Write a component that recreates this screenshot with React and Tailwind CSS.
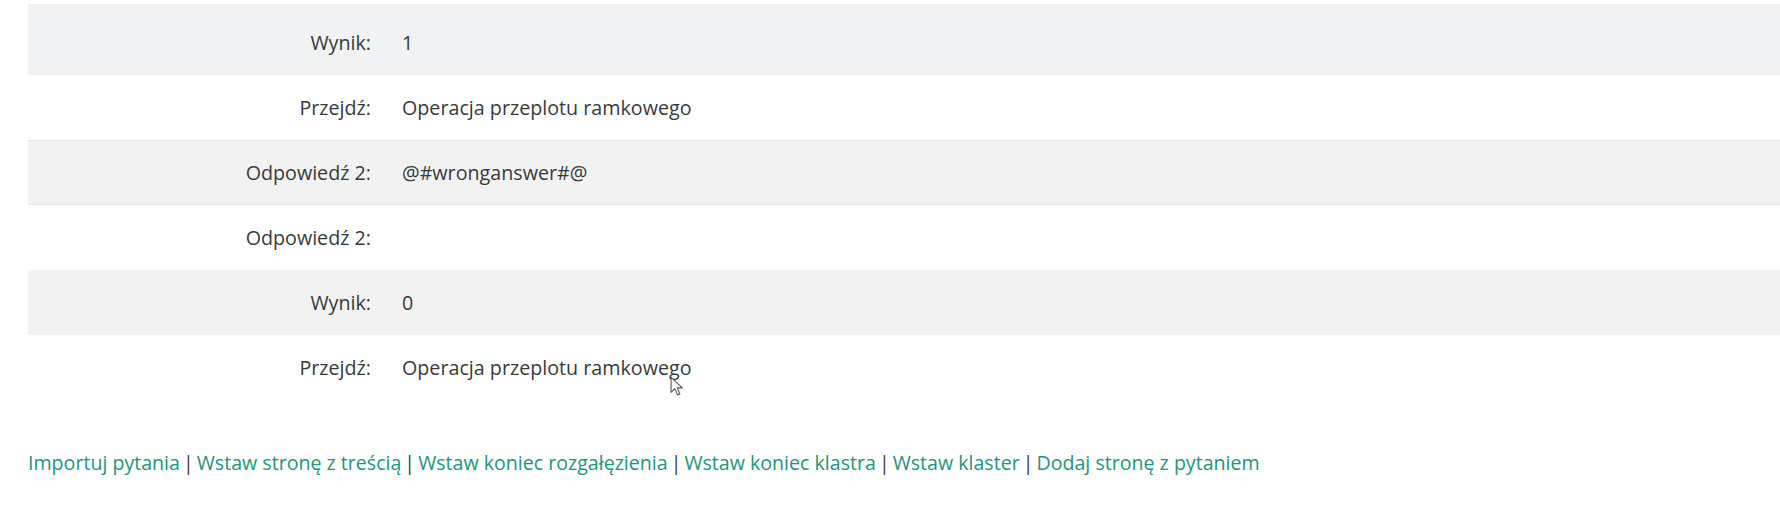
import React from "react";

const rows = [
  { label: "Wynik:", value: "1", gray: true, first: true },
  { label: "Przejdź:", value: "Operacja przeplotu ramkowego", gray: false },
  { label: "Odpowiedź 2:", value: "@#wronganswer#@", gray: true, border: true },
  { label: "Odpowiedź 2:", value: "", gray: false },
  { label: "Wynik:", value: "0", gray: true },
  { label: "Przejdź:", value: "Operacja przeplotu ramkowego", gray: false, cursor: true },
];

const links = [
  "Importuj pytania",
  "Wstaw stronę z treścią",
  "Wstaw koniec rozgałęzienia",
  "Wstaw koniec klastra",
  "Wstaw klaster",
  "Dodaj stronę z pytaniem",
];

export default function App() {
  return (
    <div
      className="w-[1780px] h-[507px] bg-white overflow-hidden text-[#373a3c] text-[19.7px]"
      style={{ fontFamily: '"Open Sans", "Noto Sans", sans-serif' }}
    >
      <div className="pt-[4px] pl-[28px]">
        {rows.map((r, i) => (
          <div
            key={i}
            className={
              "relative flex items-center " +
              (r.first ? "h-[71px] pt-[6px] bg-[#f0f2f3] " : "h-[65px] ") +
              (!r.first && r.gray ? "bg-[#f2f2f2] " : "") +
              (!r.gray ? "bg-white " : "") +
              (r.border ? "border-y border-[#e4e4e4] " : "")
            }
          >
            <div className="w-[343px] text-right">{r.label}</div>
            <div className="pl-[31px] flex-1">{r.value}</div>
            {r.cursor && (
              <svg
                className="absolute left-[642px] top-[41px]"
                width="15"
                height="22"
                viewBox="0 0 14 20"
              >
                <path
                  d="M1 1 L1 15 L4.5 11.5 L7 17.5 L9.2 16.5 L6.8 10.8 L11.5 10.8 Z"
                  fill="white"
                  stroke="#555"
                  strokeWidth="1"
                  strokeLinejoin="round"
                />
              </svg>
            )}
          </div>
        ))}
      </div>
      <div className="pl-[28px] pt-[48px] text-[19.6px] text-[#249480]">
        {links.map((l, i) => (
          <React.Fragment key={i}>
            {i > 0 && <span className="text-[#373a3c] mx-[3px]">|</span>}
            <a className="cursor-pointer">{l}</a>
          </React.Fragment>
        ))}
      </div>
    </div>
  );
}
